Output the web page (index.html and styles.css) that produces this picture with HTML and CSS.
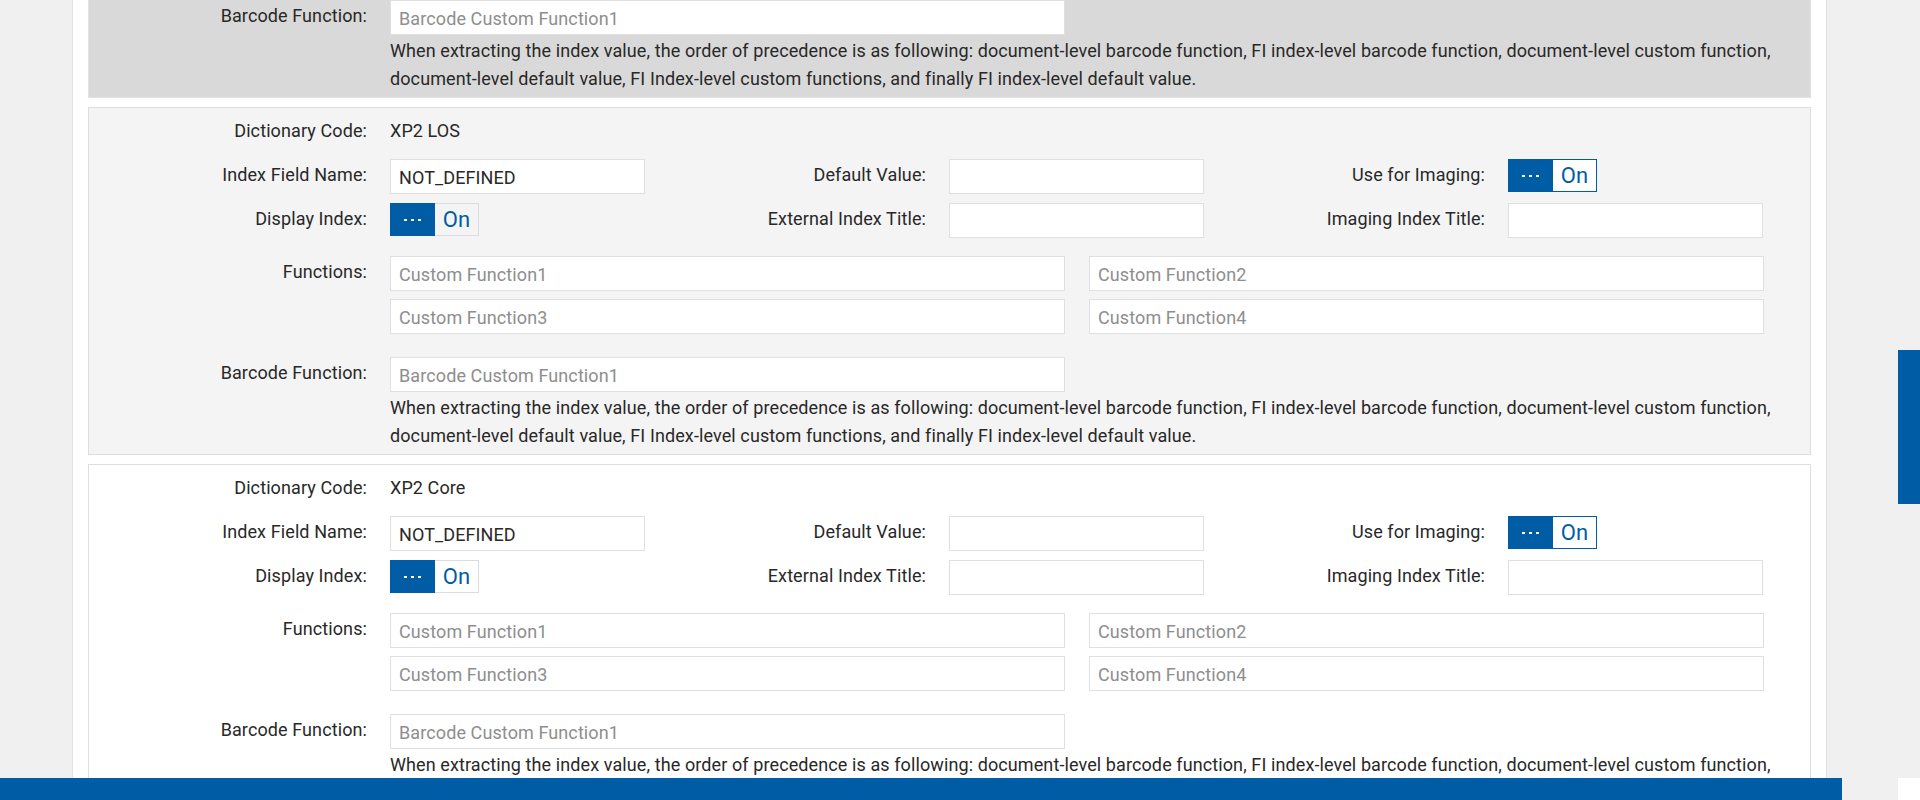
FILE: index.html
```html
<!DOCTYPE html>
<html lang="en">
<head>
<meta charset="utf-8">
<title>Index Fields</title>
<link rel="stylesheet" href="styles.css">
</head>
<body>
<main class="panel">

  <section class="entry entry--active entry--clipped">
    <div class="row row--barcode">
      <span class="lbl">Barcode Function:</span>
      <input class="field field--wide" placeholder="Barcode Custom Function1">
    </div>
    <p class="help">When extracting the index value, the order of precedence is as following: document-level barcode function, FI index-level barcode function, document-level custom function, document-level default value, FI Index-level custom functions, and finally FI index-level default value.</p>
  </section>

  <section class="entry entry--muted">
    <div class="row row--dict">
      <div class="group"><span class="lbl">Dictionary Code:</span><span class="val">XP2 LOS</span></div>
    </div>
    <div class="row row--index">
      <div class="group"><span class="lbl">Index Field Name:</span><input class="field" value="NOT_DEFINED"></div>
      <div class="group"><span class="lbl">Default Value:</span><input class="field"></div>
      <div class="group"><span class="lbl">Use for Imaging:</span><div class="toggle toggle--framed"><span class="knob"><i></i><i></i><i></i></span><span class="state">On</span></div></div>
    </div>
    <div class="row row--display">
      <div class="group"><span class="lbl">Display Index:</span><div class="toggle"><span class="knob"><i></i><i></i><i></i></span><span class="state">On</span></div></div>
      <div class="group"><span class="lbl">External Index Title:</span><input class="field"></div>
      <div class="group"><span class="lbl">Imaging Index Title:</span><input class="field"></div>
    </div>
    <div class="row row--functions">
      <span class="lbl">Functions:</span>
      <div class="fn-grid">
        <input class="field" placeholder="Custom Function1">
        <input class="field" placeholder="Custom Function2">
        <input class="field" placeholder="Custom Function3">
        <input class="field" placeholder="Custom Function4">
      </div>
    </div>
    <div class="row row--barcode">
      <span class="lbl">Barcode Function:</span>
      <input class="field field--wide" placeholder="Barcode Custom Function1">
    </div>
    <p class="help">When extracting the index value, the order of precedence is as following: document-level barcode function, FI index-level barcode function, document-level custom function, document-level default value, FI Index-level custom functions, and finally FI index-level default value.</p>
  </section>

  <section class="entry">
    <div class="row row--dict">
      <div class="group"><span class="lbl">Dictionary Code:</span><span class="val">XP2 Core</span></div>
    </div>
    <div class="row row--index">
      <div class="group"><span class="lbl">Index Field Name:</span><input class="field" value="NOT_DEFINED"></div>
      <div class="group"><span class="lbl">Default Value:</span><input class="field"></div>
      <div class="group"><span class="lbl">Use for Imaging:</span><div class="toggle toggle--framed"><span class="knob"><i></i><i></i><i></i></span><span class="state">On</span></div></div>
    </div>
    <div class="row row--display">
      <div class="group"><span class="lbl">Display Index:</span><div class="toggle"><span class="knob"><i></i><i></i><i></i></span><span class="state">On</span></div></div>
      <div class="group"><span class="lbl">External Index Title:</span><input class="field"></div>
      <div class="group"><span class="lbl">Imaging Index Title:</span><input class="field"></div>
    </div>
    <div class="row row--functions">
      <span class="lbl">Functions:</span>
      <div class="fn-grid">
        <input class="field" placeholder="Custom Function1">
        <input class="field" placeholder="Custom Function2">
        <input class="field" placeholder="Custom Function3">
        <input class="field" placeholder="Custom Function4">
      </div>
    </div>
    <div class="row row--barcode">
      <span class="lbl">Barcode Function:</span>
      <input class="field field--wide" placeholder="Barcode Custom Function1">
    </div>
    <p class="help">When extracting the index value, the order of precedence is as following: document-level barcode function, FI index-level barcode function, document-level custom function, document-level default value, FI Index-level custom functions, and finally FI index-level default value.</p>
  </section>

</main>
<div class="side-tab"></div>
<footer class="bottom-bar"></footer>
<div class="corner"></div>
</body>
</html>
```

FILE: styles.css
```css
* { box-sizing: border-box; }

html, body {
  margin: 0;
  height: 800px;
  overflow: hidden;
}

body {
  background: #f0f0f0;
  font-family: Roboto, "Liberation Sans", sans-serif;
  font-size: 18px;
  letter-spacing: 0.1px;
  color: #282828;
}

.panel {
  margin: 0 0 0 72px;
  width: 1755px;
  background: #fff;
  border-left: 1px solid #e2e2e2;
  border-right: 1px solid #e2e2e2;
  padding: 0 15px;
  min-height: 1000px;
}

.entry {
  border: 1px solid #dedede;
  background: #fff;
  padding: 6px 0 5px;
  margin-bottom: 9px;
}

.entry--active { background: #d9d9d9; border-color: #e2e2e2; }
.entry--clipped { border-top: none; padding-top: 0; }
.entry--muted { background: #f4f4f4; }

.row {
  display: flex;
  align-items: flex-start;
  height: 35px;
}

.row--dict { margin-bottom: 10px; }
.row--index { margin-bottom: 9px; }
.row--display { margin-bottom: 18px; }
.row--functions { height: auto; margin-bottom: 23px; }
.row--barcode { margin-bottom: 2px; }

.group {
  display: flex;
  align-items: flex-start;
  width: 559px;
  flex: none;
}

.lbl {
  flex: none;
  width: 278px;
  margin-right: 23px;
  text-align: right;
  line-height: 27.5px;
  padding-top: 2px;
  white-space: nowrap;
}

.row--dict .lbl { padding-top: 3px; }

.val {
  line-height: 27.5px;
  padding-top: 3px;
}

.field {
  width: 255px;
  height: 35px;
  border: 1px solid #e0e0e0;
  background: #fff;
  font-family: Roboto, "Liberation Sans", sans-serif;
  font-size: 18px;
  letter-spacing: 0.1px;
  color: #282828;
  padding: 1px 8px 0;
  margin: 0;
  outline: none;
}

.field::placeholder { color: #8e8e8e; opacity: 1; }

.field--wide { width: 675px; }

.fn-grid {
  display: grid;
  grid-template-columns: 675px 675px;
  column-gap: 24px;
  row-gap: 8px;
}

.fn-grid .field { width: 100%; }

.toggle {
  display: flex;
  height: 33px;
  width: 89px;
}

.knob {
  width: 45px;
  background: #005da5;
  display: flex;
  align-items: center;
  justify-content: center;
  gap: 4px;
}

.knob i {
  display: block;
  width: 3px;
  height: 2px;
  background: #fff;
}

.state {
  flex: 1;
  border: 1px solid #dcdcdc;
  border-left: none;
  color: #005da5;
  font-size: 22px;
  letter-spacing: 0;
  line-height: 31px;
  text-align: center;
}

.toggle--framed .state {
  background: #fff;
  border-color: #005da5;
}

.help {
  margin: 0 0 0 301px;
  width: 1415px;
  line-height: 27.5px;
}

.side-tab {
  position: fixed;
  right: 0;
  top: 350px;
  width: 22px;
  height: 154px;
  background: #005da5;
}

.bottom-bar {
  position: fixed;
  left: 0;
  bottom: 0;
  width: 1842px;
  height: 22px;
  background: #005da5;
}

.corner {
  position: fixed;
  right: 0;
  bottom: 0;
  width: 22px;
  height: 22px;
  background: #fff;
}
```
